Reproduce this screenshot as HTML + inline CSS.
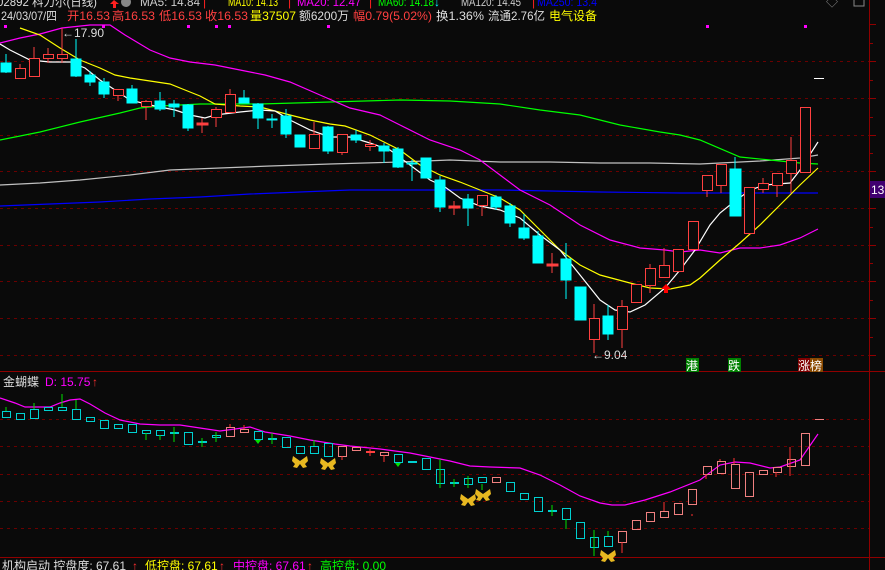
<!DOCTYPE html>
<html><head><meta charset="utf-8"><style>
html,body{margin:0;padding:0;background:#0a0a0a;width:885px;height:570px;overflow:hidden}
svg{display:block}
text{font-family:"Liberation Sans","Noto Sans CJK SC",sans-serif;font-size:12px}
</style></head><body>
<svg width="885" height="570" xmlns="http://www.w3.org/2000/svg">
<rect width="885" height="570" fill="#0a0a0a"/>
<g stroke="#6a0000" stroke-dasharray="3,4" stroke-width="1">
<line x1="0" y1="61.5" x2="869" y2="61.5"/><line x1="0" y1="98.5" x2="869" y2="98.5"/><line x1="0" y1="135.5" x2="869" y2="135.5"/><line x1="0" y1="171.5" x2="869" y2="171.5"/><line x1="0" y1="208.5" x2="869" y2="208.5"/><line x1="0" y1="245.5" x2="869" y2="245.5"/><line x1="0" y1="281.5" x2="869" y2="281.5"/><line x1="0" y1="318.5" x2="869" y2="318.5"/><line x1="0" y1="355.5" x2="869" y2="355.5"/>
<line x1="0" y1="419.5" x2="869" y2="419.5"/><line x1="0" y1="446.5" x2="869" y2="446.5"/><line x1="0" y1="474.5" x2="869" y2="474.5"/><line x1="0" y1="501.5" x2="869" y2="501.5"/><line x1="0" y1="528.5" x2="869" y2="528.5"/>
</g>
<line x1="0" y1="371.5" x2="885" y2="371.5" stroke="#900000"/>
<line x1="0" y1="557.5" x2="885" y2="557.5" stroke="#900000"/>
<line x1="869.5" y1="0" x2="869.5" y2="570" stroke="#900000"/>
<g stroke="#900000"><line x1="869" y1="24.5" x2="876" y2="24.5"/><line x1="869" y1="43.5" x2="873" y2="43.5"/><line x1="869" y1="61.5" x2="876" y2="61.5"/><line x1="869" y1="80.5" x2="873" y2="80.5"/><line x1="869" y1="98.5" x2="876" y2="98.5"/><line x1="869" y1="117.5" x2="873" y2="117.5"/><line x1="869" y1="135.5" x2="876" y2="135.5"/><line x1="869" y1="153.5" x2="873" y2="153.5"/><line x1="869" y1="171.5" x2="876" y2="171.5"/><line x1="869" y1="208.5" x2="876" y2="208.5"/><line x1="869" y1="227.5" x2="873" y2="227.5"/><line x1="869" y1="245.5" x2="876" y2="245.5"/><line x1="869" y1="263.5" x2="873" y2="263.5"/><line x1="869" y1="281.5" x2="876" y2="281.5"/><line x1="869" y1="300.5" x2="873" y2="300.5"/><line x1="869" y1="318.5" x2="876" y2="318.5"/><line x1="869" y1="337.5" x2="873" y2="337.5"/><line x1="869" y1="355.5" x2="876" y2="355.5"/></g>
<rect x="870" y="181" width="15" height="17" fill="#400070"/>
<text x="871" y="194" fill="#fff">13</text>

<g fill="none" stroke-width="1.2">
<polyline stroke="#0000ff" points="0,206 50,204 100,202 150,199 200,197 250,194 300,192 350,190 420,190 500,190 600,192 680,193 818,193"/>
<polyline stroke="#c0c0c0" points="0,185 40,183 80,180 130,175 170,170 220,168 270,166 330,164 400,162 450,160 500,162 550,162 600,163 650,163 700,164 760,161 800,158 818,155"/>
<polyline stroke="#00ff00" points="0,140 40,132 80,122 120,113 140,108 160,106 200,104 260,104 330,102 400,100 450,101 500,104 540,110 580,115 620,125 660,132 680,135 700,140 740,157 770,160 800,163 818,164"/>
<polyline stroke="#ff00ff" points="0,43 20,38 40,34 62,28 90,25 110,25 125,35 150,50 170,58 190,62 215,65 240,70 265,75 290,82 320,95 350,108 380,115 400,125 430,140 460,150 480,160 500,175 520,190 550,205 580,225 610,240 640,248 665,250 680,252 700,250 720,253 740,248 760,248 780,245 800,238 818,229"/>
<polyline stroke="#ffff00" points="20,28 40,35 60,48 80,60 100,68 115,75 130,78 150,81 170,84 185,90 200,96 215,104 240,106 260,107 290,115 310,120 330,124 345,126 370,135 400,150 420,165 440,175 460,182 480,190 500,198 520,210 540,230 560,250 580,265 600,275 630,283 650,288 670,289 690,285 700,278 720,260 740,243 760,225 780,205 800,185 818,168"/>
<polyline stroke="#ffffff" points="0,44 10,50 30,60 50,62 70,62 85,68 100,80 115,90 130,100 150,105 175,110 190,115 205,118 215,115 240,112 260,110 275,111 290,120 310,130 330,137 350,137 370,143 390,150 410,165 430,180 445,187 460,198 480,206 500,210 520,218 540,235 560,250 580,275 600,300 615,310 630,312 645,305 665,288 680,270 695,250 710,225 720,213 730,205 750,190 765,185 790,183 800,170 818,142"/>
</g>

<g stroke="#00ffff" fill="#00ffff">
<line x1="6" y1="54" x2="6" y2="73"/><rect x="1" y="63" width="10" height="9"/>
<line x1="76" y1="39" x2="76" y2="77"/><rect x="71" y="59" width="10" height="17"/>
<line x1="90" y1="71" x2="90" y2="86"/><rect x="85" y="75" width="10" height="7"/>
<line x1="104" y1="78" x2="104" y2="98"/><rect x="99" y="82" width="10" height="12"/>
<line x1="132" y1="85" x2="132" y2="103"/><rect x="127" y="89" width="10" height="14"/>
<line x1="160" y1="92" x2="160" y2="111"/><rect x="155" y="101" width="10" height="8"/>
<line x1="174" y1="100" x2="174" y2="117"/><rect x="169" y="104" width="10" height="3"/>
<line x1="188" y1="104" x2="188" y2="131"/><rect x="183" y="105" width="10" height="23"/>
<line x1="244" y1="90" x2="244" y2="103"/><rect x="239" y="98" width="10" height="5"/>
<line x1="258" y1="103" x2="258" y2="129"/><rect x="253" y="104" width="10" height="14"/>
<line x1="272" y1="114" x2="272" y2="128"/><rect x="267" y="119" width="10" height="1"/>
<line x1="286" y1="109" x2="286" y2="138"/><rect x="281" y="116" width="10" height="18"/>
<rect x="295" y="135" width="10" height="12"/>
<line x1="328" y1="126" x2="328" y2="154"/><rect x="323" y="127" width="10" height="24"/>
<line x1="356" y1="130" x2="356" y2="143"/><rect x="351" y="135" width="10" height="5"/>
<line x1="384" y1="143" x2="384" y2="163"/><rect x="379" y="146" width="10" height="5"/>
<line x1="398" y1="147" x2="398" y2="168"/><rect x="393" y="149" width="10" height="18"/>
<line x1="412" y1="160" x2="412" y2="181"/><rect x="407" y="163" width="10" height="1"/>
<rect x="421" y="158" width="10" height="20"/>
<line x1="440" y1="176" x2="440" y2="212"/><rect x="435" y="180" width="10" height="27"/>
<line x1="468" y1="194" x2="468" y2="226"/><rect x="463" y="199" width="10" height="9"/>
<line x1="496" y1="195" x2="496" y2="210"/><rect x="491" y="197" width="10" height="10"/>
<line x1="510" y1="203" x2="510" y2="227"/><rect x="505" y="206" width="10" height="17"/>
<line x1="524" y1="214" x2="524" y2="240"/><rect x="519" y="228" width="10" height="10"/>
<line x1="538" y1="231" x2="538" y2="263"/><rect x="533" y="236" width="10" height="27"/>
<line x1="566" y1="243" x2="566" y2="299"/><rect x="561" y="259" width="10" height="21"/>
<rect x="575" y="287" width="11" height="33"/>
<line x1="608" y1="305" x2="608" y2="340"/><rect x="603" y="316" width="10" height="18"/>
<line x1="735" y1="157" x2="735" y2="169"/><rect x="730" y="169" width="11" height="47"/>
</g>
<g stroke="#ff4040" fill="#0a0a0a">
<line x1="20" y1="64" x2="20" y2="68"/><rect x="15.5" y="68.5" width="10" height="10"/>
<line x1="34" y1="47" x2="34" y2="77"/><rect x="29.5" y="58.5" width="10" height="18"/>
<line x1="48" y1="48" x2="48" y2="63"/><rect x="43.5" y="54.5" width="10" height="4"/>
<line x1="62" y1="28" x2="62" y2="63"/><rect x="57.5" y="54.5" width="10" height="4"/>
<line x1="118" y1="95" x2="118" y2="101"/><rect x="113.5" y="89.5" width="10" height="6"/>
<line x1="146" y1="100" x2="146" y2="120"/><rect x="141.5" y="101.5" width="10" height="5"/>
<line x1="202" y1="118" x2="202" y2="133"/><rect x="197" y="123" width="11" height="2" fill="#ff4040"/>
<line x1="216" y1="107" x2="216" y2="127"/><rect x="211.5" y="109.5" width="10" height="8"/>
<line x1="230" y1="89" x2="230" y2="94"/><rect x="225.5" y="94.5" width="10" height="18"/>
<line x1="314" y1="122" x2="314" y2="134"/><rect x="309.5" y="134.5" width="10" height="14"/>
<line x1="342" y1="152" x2="342" y2="155"/><rect x="337.5" y="134.5" width="10" height="18"/>
<line x1="370" y1="140" x2="370" y2="151"/><rect x="365.5" y="144.5" width="10" height="2"/>
<line x1="454" y1="201" x2="454" y2="215"/><rect x="449" y="206" width="11" height="2" fill="#ff4040"/>
<line x1="482" y1="205" x2="482" y2="216"/><rect x="477.5" y="195.5" width="10" height="10"/>
<line x1="552" y1="253" x2="552" y2="273"/><rect x="547" y="264" width="11" height="2" fill="#ff4040"/>
<line x1="594" y1="304" x2="594" y2="353"/><rect x="589.5" y="318.5" width="10" height="21"/>
<line x1="622" y1="300" x2="622" y2="348"/><rect x="617.5" y="306.5" width="10" height="23"/>
<line x1="636" y1="302" x2="636" y2="303"/><rect x="631.5" y="284.5" width="10" height="18"/>
<line x1="650" y1="264" x2="650" y2="293"/><rect x="645.5" y="268.5" width="10" height="17"/>
<line x1="664" y1="248" x2="664" y2="265"/><rect x="659.5" y="265.5" width="10" height="12"/>
<rect x="673.5" y="249.5" width="10" height="22"/>
<rect x="688.5" y="221.5" width="10" height="28"/>
<line x1="707" y1="190" x2="707" y2="197"/><rect x="702.5" y="175.5" width="10" height="15"/>
<line x1="721" y1="185" x2="721" y2="193"/><rect x="716.5" y="164.5" width="10" height="21"/>
<rect x="744.5" y="187.5" width="10" height="46"/>
<line x1="763" y1="178" x2="763" y2="193"/><rect x="758.5" y="183.5" width="10" height="6"/>
<line x1="777" y1="185" x2="777" y2="197"/><rect x="772.5" y="173.5" width="10" height="12"/>
<line x1="791" y1="137" x2="791" y2="193"/><rect x="786.5" y="160.5" width="10" height="13"/>
<rect x="800.5" y="107.5" width="10" height="65"/>
</g>
<line x1="814" y1="78.5" x2="824" y2="78.5" stroke="#fff"/>
<path d="M666,284 L661,289 L664,289 L664,293 L668,293 L668,289 L671,289Z" fill="#ff0000"/>
<g fill="#ff00ff"><rect x="4" y="25" width="3" height="3"/><rect x="102" y="25" width="3" height="3"/><rect x="187" y="25" width="3" height="3"/><rect x="215" y="25" width="3" height="3"/><rect x="228" y="25" width="3" height="3"/><rect x="327" y="25" width="3" height="3"/><rect x="706" y="25" width="3" height="3"/><rect x="804" y="25" width="3" height="3"/></g>
<text x="62" y="37" fill="#ddd">←17.90</text>
<text x="592" y="359" fill="#ddd">←9.04</text>
<rect x="686" y="358" width="13" height="14" fill="#008000"/><text x="686" y="370" fill="#fff">港</text>
<rect x="728" y="358" width="13" height="14" fill="#008000"/><text x="728" y="370" fill="#fff">跌</text>
<rect x="798" y="358" width="12" height="14" fill="#800000"/><text x="798" y="370" fill="#fff">涨</text>
<rect x="810" y="358" width="13" height="14" fill="#8a4a00"/><text x="810" y="370" fill="#fff">榜</text>

<!-- header -->
<text x="-3" y="6" fill="#ddd" textLength="100" lengthAdjust="spacingAndGlyphs">02892 科力尔(日线)</text>
<path d="M114,0 L110,4 L113,4 L113,8 L116,8 L116,4 L119,4Z" fill="#ff2020"/>
<circle cx="126" cy="2" r="5" fill="#888"/>
<text x="140" y="6" fill="#ccc" textLength="60" lengthAdjust="spacingAndGlyphs">MA5: 14.84</text>
<text x="203" y="6" fill="#ff2020">|</text>
<text x="228" y="6" fill="#ffff00" textLength="50" lengthAdjust="spacingAndGlyphs">MA10: 14.13</text>
<text x="288" y="6" fill="#ff2020">|</text>
<text x="297" y="6" fill="#ff00ff" textLength="64" lengthAdjust="spacingAndGlyphs">MA20: 12.47</text>
<text x="369" y="6" fill="#ff2020">|</text>
<text x="378" y="6" fill="#00ff00" textLength="56" lengthAdjust="spacingAndGlyphs">MA60: 14.18</text>
<text x="434" y="6" fill="#00ffff">↓</text>
<text x="461" y="6" fill="#ccc" textLength="60" lengthAdjust="spacingAndGlyphs">MA120: 14.45</text>
<text x="532" y="6" fill="#ff2020">|</text>
<text x="537" y="6" fill="#0000ff" textLength="60" lengthAdjust="spacingAndGlyphs">MA250: 13.4</text>
<text x="826" y="6" fill="#888">◇</text>
<rect x="854" y="-3" width="10" height="9" fill="none" stroke="#888"/>
<text x="1" y="20" fill="#ddd" textLength="56" lengthAdjust="spacingAndGlyphs">24/03/07/四</text>
<text x="67" y="20" fill="#ff4040" textLength="43" lengthAdjust="spacingAndGlyphs">开16.53</text>
<text x="112" y="20" fill="#ff4040" textLength="43" lengthAdjust="spacingAndGlyphs">高16.53</text>
<text x="159" y="20" fill="#ff4040" textLength="43" lengthAdjust="spacingAndGlyphs">低16.53</text>
<text x="205" y="20" fill="#ff4040" textLength="43" lengthAdjust="spacingAndGlyphs">收16.53</text>
<text x="250" y="20" fill="#ffff00" textLength="46" lengthAdjust="spacingAndGlyphs">量37507</text>
<text x="299" y="20" fill="#ddd" textLength="50" lengthAdjust="spacingAndGlyphs">额6200万</text>
<text x="353" y="20" fill="#ff4040" textLength="79" lengthAdjust="spacingAndGlyphs">幅0.79(5.02%)</text>
<text x="436" y="20" fill="#ddd" textLength="48" lengthAdjust="spacingAndGlyphs">换1.36%</text>
<text x="488" y="20" fill="#ddd" textLength="57" lengthAdjust="spacingAndGlyphs">流通2.76亿</text>
<text x="549" y="20" fill="#ffff00" textLength="48" lengthAdjust="spacingAndGlyphs">电气设备</text>

<!-- lower panel -->
<text x="3" y="386" fill="#ddd">金蝴蝶</text>
<text x="45" y="386" fill="#ff00ff">D: 15.75</text>
<text x="92" y="386" fill="#ff3030">↑</text>
<polyline fill="none" stroke="#ff00ff" stroke-width="1.2" points="0,398 15,403 25,407 50,407 60,403 70,400 80,399 90,404 105,413 120,420 140,424 160,425 180,425 200,428 220,431 250,427 265,432 290,436 310,440 335,444 350,446 380,449 410,453 430,457 450,461 470,466 490,467 520,468 540,475 560,485 580,496 600,503 612,505 625,505 645,500 670,492 700,480 720,465 735,462 750,463 770,468 780,467 800,460 818,434"/>
<g stroke="#00d0d0" fill="none">
<rect x="2.5" y="411.5" width="8" height="6"/><rect x="16.5" y="413.5" width="8" height="6"/><rect x="30.5" y="409.5" width="8" height="9"/><rect x="44.5" y="407.5" width="8" height="3"/><rect x="58.5" y="407.5" width="8" height="3"/><rect x="72.5" y="409.5" width="8" height="10"/><rect x="86.5" y="417.5" width="8" height="4"/><rect x="100.5" y="420.5" width="8" height="8"/><rect x="114.5" y="424.5" width="8" height="4"/><rect x="128.5" y="424.5" width="8" height="8"/><rect x="142.5" y="430.5" width="8" height="3"/><rect x="156.5" y="430.5" width="8" height="5"/><rect x="184.5" y="432.5" width="8" height="12"/><rect x="212.5" y="435.5" width="8" height="2"/><rect x="254.5" y="431.5" width="8" height="8"/><rect x="282.5" y="437.5" width="8" height="10"/><rect x="296.5" y="446.5" width="8" height="7"/><rect x="310.5" y="446.5" width="8" height="7"/><rect x="324.5" y="443.5" width="8" height="13"/><rect x="394.5" y="454.5" width="8" height="8"/><rect x="422.5" y="458.5" width="8" height="11"/><rect x="436.5" y="469.5" width="8" height="14"/><rect x="464.5" y="478.5" width="8" height="6"/><rect x="478.5" y="477.5" width="8" height="5"/><rect x="506.5" y="482.5" width="8" height="9"/><rect x="520.5" y="493.5" width="8" height="6"/><rect x="534.5" y="497.5" width="8" height="14"/><rect x="562.5" y="508.5" width="8" height="11"/><rect x="576.5" y="522.5" width="8" height="16"/><rect x="590.5" y="537.5" width="8" height="10"/><rect x="604.5" y="536.5" width="8" height="10"/>
</g>
<g stroke="#00d0d0" stroke-width="2"><line x1="170" y1="433" x2="179" y2="433"/><line x1="198" y1="442" x2="207" y2="442"/><line x1="268" y1="439" x2="277" y2="439"/><line x1="408" y1="462" x2="417" y2="462"/><line x1="450" y1="483" x2="459" y2="483"/><line x1="548" y1="511" x2="557" y2="511"/></g>
<g stroke="#00e000"><line x1="6" y1="407" x2="6" y2="411"/><line x1="34" y1="403" x2="34" y2="409"/><line x1="62" y1="394" x2="62" y2="407"/><line x1="76" y1="400" x2="76" y2="409"/><line x1="146" y1="433" x2="146" y2="440"/><line x1="160" y1="435" x2="160" y2="440"/><line x1="174" y1="427" x2="174" y2="442"/><line x1="202" y1="438" x2="202" y2="447"/><line x1="216" y1="432" x2="216" y2="442"/><line x1="272" y1="433" x2="272" y2="444"/><line x1="314" y1="440" x2="314" y2="446"/><line x1="440" y1="459" x2="440" y2="488"/><line x1="454" y1="479" x2="454" y2="487"/><line x1="468" y1="476" x2="468" y2="488"/><line x1="482" y1="484" x2="482" y2="490"/><line x1="552" y1="505" x2="552" y2="516"/><line x1="566" y1="519" x2="566" y2="529"/><line x1="594" y1="530" x2="594" y2="556"/><line x1="608" y1="531" x2="608" y2="536"/></g>
<g stroke="#f08080" fill="none">
<rect x="226.5" y="427.5" width="8" height="9"/><rect x="240.5" y="429.5" width="8" height="3"/><rect x="338.5" y="446.5" width="8" height="10"/><rect x="352.5" y="447.5" width="8" height="3"/><rect x="380.5" y="452.5" width="8" height="3"/><rect x="492.5" y="477.5" width="8" height="5"/><rect x="618.5" y="531.5" width="8" height="11"/><rect x="632.5" y="520.5" width="8" height="9"/><rect x="646.5" y="512.5" width="8" height="9"/><rect x="660.5" y="511.5" width="8" height="6"/><rect x="674.5" y="503.5" width="8" height="11"/><rect x="688.5" y="489.5" width="8" height="15"/><rect x="703.5" y="466.5" width="8" height="8"/><rect x="717.5" y="461.5" width="8" height="12"/><rect x="731.5" y="464.5" width="8" height="24"/><rect x="745.5" y="472.5" width="8" height="24"/><rect x="759.5" y="470.5" width="8" height="4"/><rect x="773.5" y="467.5" width="8" height="5"/><rect x="787.5" y="459.5" width="8" height="7"/><rect x="801.5" y="433.5" width="8" height="32"/>
</g>
<g stroke="#ff3030"><line x1="230" y1="424" x2="230" y2="427"/><line x1="244" y1="425" x2="244" y2="429"/><line x1="342" y1="456" x2="342" y2="460"/><line x1="370" y1="449" x2="370" y2="456"/><line x1="384" y1="455" x2="384" y2="462"/><line x1="622" y1="542" x2="622" y2="553"/><line x1="664" y1="502" x2="664" y2="511"/><line x1="692" y1="514" x2="692" y2="516"/><line x1="706" y1="474" x2="706" y2="479"/><line x1="720" y1="459" x2="720" y2="461"/><line x1="734" y1="458" x2="734" y2="464"/><line x1="776" y1="472" x2="776" y2="477"/><line x1="790" y1="447" x2="790" y2="476"/></g>
<g stroke="#ff4040" stroke-width="2"><line x1="366" y1="452" x2="375" y2="452"/></g>
<line x1="815" y1="419.5" x2="824" y2="419.5" stroke="#f08080"/>
<g fill="#e8b820">
<path d="M300,461 l-7,-5 -1,5 3,3 -2,3 4,1 3,-4 3,4 4,-1 -2,-3 3,-3 -1,-5z"/>
<path d="M328,463 l-7,-5 -1,5 3,3 -2,3 4,1 3,-4 3,4 4,-1 -2,-3 3,-3 -1,-5z"/>
<path d="M468,499 l-7,-5 -1,5 3,3 -2,3 4,1 3,-4 3,4 4,-1 -2,-3 3,-3 -1,-5z"/>
<path d="M483,494 l-7,-5 -1,5 3,3 -2,3 4,1 3,-4 3,4 4,-1 -2,-3 3,-3 -1,-5z"/>
<path d="M608,555 l-7,-5 -1,5 3,3 -2,3 4,1 3,-4 3,4 4,-1 -2,-3 3,-3 -1,-5z"/>
</g>
<g fill="#00e000"><path d="M255,440 l6,0 -3,4z"/><path d="M395,463 l6,0 -3,4z"/></g>

<text x="2" y="570" fill="#ddd">机构启动 控盘度: 67.61</text>
<text x="132" y="570" fill="#ff3030">↑</text>
<text x="145" y="570" fill="#ffff00">低控盘: 67.61</text>
<text x="219" y="570" fill="#ff3030">↑</text>
<text x="233" y="570" fill="#ff00ff">中控盘: 67.61</text>
<text x="307" y="570" fill="#ff3030">↑</text>
<text x="320" y="570" fill="#00ff00">高控盘: 0.00</text>
</svg>
</body></html>
